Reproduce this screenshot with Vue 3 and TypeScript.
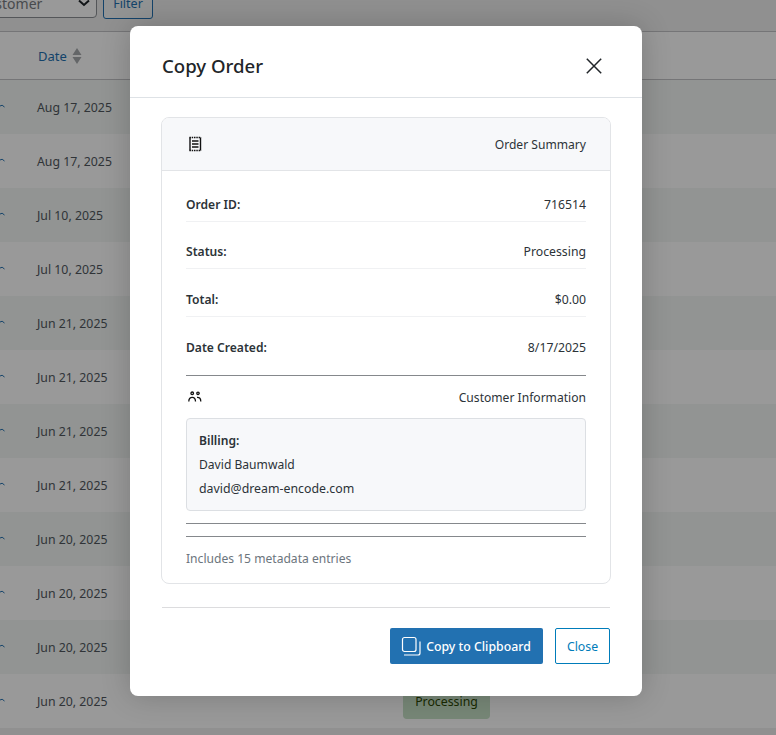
<template>
  <div class="page">
    <div class="toolbar">
      <div class="select">
        <span>Filter by customer</span>
        <svg width="14" height="14" viewBox="0 0 14 14" class="chev"><path d="M2 4.500l5 4.500 5-4.500" fill="none" stroke="#1d2327" stroke-width="2" /></svg>
      </div>
      <button class="filter-btn">Filter</button>
    </div>
    <div class="table">
      <div class="thead">
        <span class="th-date">Date</span>
        <svg class="sort" width="10" height="16" viewBox="0 0 10 16"><path d="M5 0l4.500 7h-9z M5 16l4.500-7h-9z" fill="#a7aaad" /></svg>
      </div>
      <div v-for="(r, i) in rows" :key="i" class="row">
        <svg class="tick" width="5" height="4" viewBox="0 0 5 4"><path d="M0 2Q2 0 4.500 3" fill="none" stroke="#2271b1" stroke-width="1" /></svg>
        <span class="date">{{ r }}</span>
        <span v-if="i === rows.length - 1" class="badge">Processing</span>
      </div>
    </div>

    <div class="overlay">
      <div class="modal">
        <div class="modal-head">
          <h2>Copy Order</h2>
          <svg class="x" width="16" height="16" viewBox="0 0 16 16"><path d="M.8.800l14.400 14.400M15.200.800L.8 15.200" stroke="#212529" stroke-width="1.500" fill="none" /></svg>
        </div>
        <div class="modal-body">
          <div class="card">
            <div class="card-head">
              <svg class="receipt" width="13" height="16" viewBox="0 0 13 16">
                <path d="M1 1.500V14.500M11.500 1.500V14.500" stroke="#111" stroke-width="1.400" />
                <path d="M.4 1.500h11.700M.4 14.500h11.700" stroke="#111" stroke-width="1.400" stroke-dasharray="1.500 .8" />
                <path d="M3 5h6.500M3 8h6.500M3 11h6.500" stroke="#111" stroke-width="1.300" />
              </svg>
              <span>Order Summary</span>
            </div>
            <div class="card-body">
              <div v-for="f in fields" :key="f.label" class="field">
                <strong>{{ f.label }}</strong>
                <span class="val">{{ f.value }}</span>
              </div>
              <hr class="first" />
              <div class="cust">
                <svg width="14" height="14" viewBox="0 0 14 14">
                  <circle cx="4.200" cy="3.300" r="1.300" fill="none" stroke="#111" stroke-width="1.300" />
                  <circle cx="10" cy="3.300" r="1.200" fill="none" stroke="#111" stroke-width="1.300" />
                  <path d="M.8 11.500C.8 8.500 2.500 7.300 4.200 7.300S7.500 8.500 7.500 11.500M9 7.300c2-.2 3.800.9 3.800 4.200" fill="none" stroke="#111" stroke-width="1.300" />
                </svg>
                <span>Customer Information</span>
              </div>
              <div class="billing">
                <strong>Billing:</strong>
                <div>David Baumwald</div>
                <div class="email">david@dream-encode.com</div>
              </div>
              <hr class="second" />
              <hr class="third" />
              <p class="meta">Includes 15 metadata entries</p>
            </div>
          </div>
          <div class="foot">
            <button class="btn primary">
              <svg width="20" height="20" viewBox="0 0 20 20">
                <rect x="1.500" y="1.500" width="13.500" height="14" rx="2" fill="none" stroke="#fff" stroke-width="1.200" />
                <path d="M19 5.500V17a2 2 0 0 1-2 2H3" fill="none" stroke="#fff" stroke-width="1.200" />
              </svg>
              Copy to Clipboard
            </button>
            <button class="btn ghost">Close</button>
          </div>
        </div>
      </div>
    </div>
  </div>
</template>

<script setup lang="ts">
const rows: string[] = [
  'Aug 17, 2025',
  'Aug 17, 2025',
  'Jul 10, 2025',
  'Jul 10, 2025',
  'Jun 21, 2025',
  'Jun 21, 2025',
  'Jun 21, 2025',
  'Jun 21, 2025',
  'Jun 20, 2025',
  'Jun 20, 2025',
  'Jun 20, 2025',
  'Jun 20, 2025'
]

const fields = [
  { label: 'Order ID:', value: '716514' },
  { label: 'Status:', value: 'Processing' },
  { label: 'Total:', value: '$0.00' },
  { label: 'Date Created:', value: '8/17/2025' }
]
</script>

<style>
html, body { margin: 0; overflow: hidden; }
</style>

<style scoped>
.page {
  position: relative;
  width: 776px;
  height: 735px;
  overflow: hidden;
  background: #f0f0f1;
  font-family: "Noto Sans", "Open Sans", sans-serif;
  font-size: 13px;
  color: #2c3338;
}
.toolbar {
  height: 31px;
  display: flex;
  gap: 6px;
  align-items: flex-end;
  margin-left: -120px;
}
.select {
  box-sizing: border-box;
  width: 217px;
  height: 30px;
  margin-bottom: 13px;
  border: 1px solid #8c8f94;
  border-radius: 4px;
  background: #fff;
  display: flex;
  align-items: center;
  justify-content: space-between;
  padding: 0 5px 0 43px;
  color: #787c82;
  font-size: 14px;
  flex: none;
  white-space: nowrap;
}
.filter-btn {
  box-sizing: border-box;
  width: 50px;
  height: 32px;
  margin-bottom: 12px;
  border: 1px solid #2271b1;
  border-radius: 3px;
  background: #f6f7f7;
  color: #2271b1;
  font: inherit;
  font-size: 12.500px;
  padding: 0;
}
.table { border-top: 1px solid #c3c4c7; background: #fff; }
.thead {
  height: 47px;
  border-bottom: 1px solid #c3c4c7;
  display: flex;
  align-items: center;
  padding-left: 38px;
  gap: 5px;
}
.th-date { color: #2271b1; font-size: 13px; }
.row {
  height: 54px;
  display: flex;
  align-items: center;
  position: relative;
  padding-left: 37px;
  color: #50575e;
  font-size: 12.300px;
}
.row:nth-child(even) { background: #f3f7f5; }
.row:nth-child(odd) { background: #fff; }
.tick { position: absolute; left: 0; top: 24px; }
.date { width: 366px; flex: none; }
.badge {
  box-sizing: border-box;
  width: 87px;
  height: 34px;
  border-radius: 4px;
  background: #c6e1c6;
  display: flex;
  align-items: center;
  justify-content: center;
  color: #2c4700;
  margin-bottom: -1px;
}
.overlay {
  position: absolute;
  inset: 0;
  background: rgba(0, 0, 0, 0.4);
  padding: 26px 0 0 130px;
}
.modal {
  width: 512px;
  height: 670px;
  background: #fff;
  border-radius: 8px;
  box-shadow: 0 0 30px rgba(0, 0, 0, 0.2);
  display: flex;
  flex-direction: column;
}
.modal-head {
  box-sizing: border-box;
  height: 72px;
  flex: none;
  border-bottom: 1px solid #dee2e6;
  display: flex;
  align-items: center;
  justify-content: space-between;
  padding: 8px 40px 0 32px;
  color: #212529;
}
h2 {
  margin: 0;
  font-size: 18.600px;
  font-weight: 500;
  color: #212529;
}
.modal-body { padding: 19px 32px 0 31px; }
.card {
  box-sizing: border-box;
  width: 450px;
  height: 467px;
  border: 1px solid #e2e4e7;
  border-radius: 8px;
  overflow: hidden;
}
.card-head {
  box-sizing: border-box;
  height: 53px;
  background: #f7f8fa;
  border-bottom: 1px solid #e2e4e7;
  display: flex;
  align-items: center;
  justify-content: space-between;
  padding: 0 24px 0 27px;
  font-size: 12.100px;
}
.card-body { padding: 3px 24px 0; }
.field {
  box-sizing: border-box;
  height: 47.500px;
  padding-bottom: 7.800px;
  display: flex;
  align-items: flex-end;
  justify-content: space-between;
  border-bottom: 1px solid #f0f1f3;
  font-size: 12.100px;
}
.field strong { font-weight: 600; }
.val { font-size: 12.250px; }
.field:nth-of-type(4) { border-bottom: 0; }
hr {
  border: 0;
  border-top: 1px solid #85888c;
  margin: 0;
}
hr.first { margin-top: 11px; }
.cust {
  display: flex;
  justify-content: space-between;
  align-items: center;
  height: 42px;
  padding-left: 2px;
  font-size: 12.100px;
}
.billing {
  box-sizing: border-box;
  height: 93px;
  background: #f7f8fa;
  border: 1px solid #dcdfe3;
  border-radius: 4px;
  padding: 10px 12px;
  font-size: 12.100px;
  line-height: 24px;
}
.billing strong { font-weight: 600; display: block; }
.email { font-size: 12.350px; }
hr.second { margin-top: 12px; }
hr.third { margin-top: 12px; }
.meta {
  margin: 13px 0 0;
  font-size: 12.100px;
  color: #6c757d;
}
.foot {
  margin-top: 23px;
  border-top: 1px solid #dcdcde;
  margin-left: 1px;
  width: 448px;
  padding-top: 20px;
  display: flex;
  justify-content: flex-end;
  gap: 12px;
}
.btn {
  box-sizing: border-box;
  height: 36px;
  border-radius: 2px;
  font-family: inherit;
  font-size: 12.300px;
  padding: 0;
  display: flex;
  align-items: center;
  justify-content: center;
}
.primary {
  width: 153px;
  gap: 5px;
  padding-right: 1px;
  background: #2271b1;
  border: 0;
  color: #fff;
  font-weight: 500;
}
.ghost {
  width: 55px;
  background: #fff;
  border: 1px solid #007cba;
  color: #007cba;
}
</style>
